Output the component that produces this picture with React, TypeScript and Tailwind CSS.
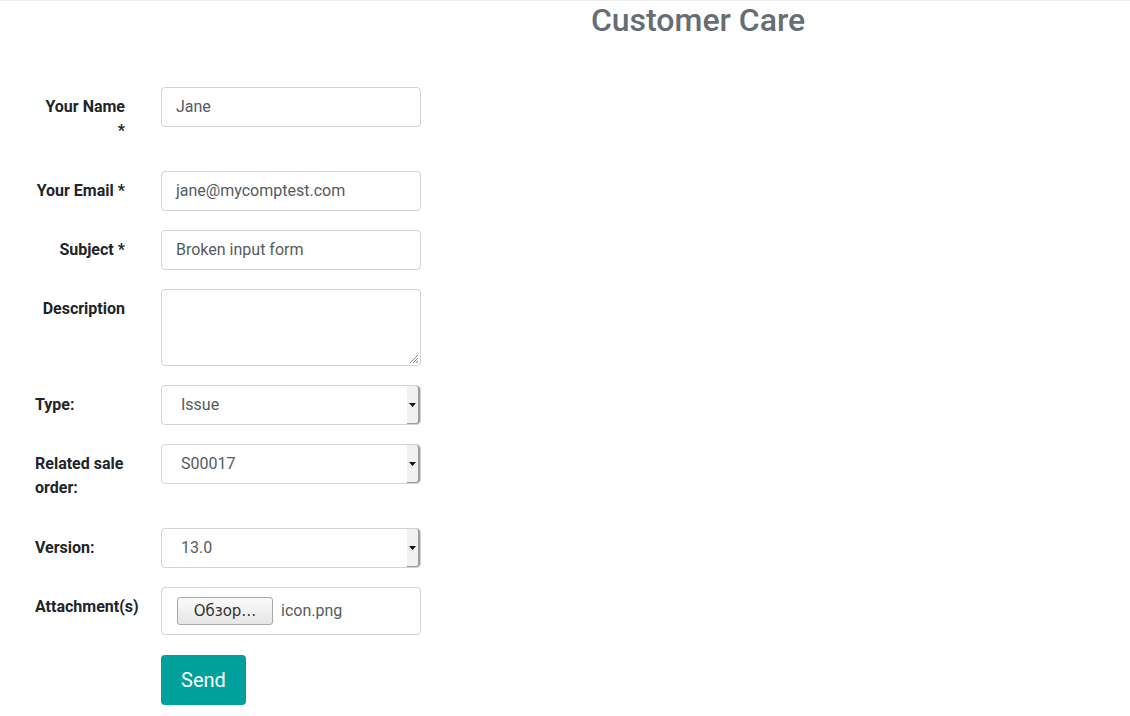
import React from "react";

const inputBox =
  "h-10 w-[260px] rounded border border-[#ced4da] bg-white pl-[14px] flex items-center text-[16px] text-[#555b62]";

const Label = ({
  children,
  right,
  tall,
}: {
  children: React.ReactNode;
  right?: boolean;
  tall?: boolean;
}) => (
  <div
    className={`w-[90px] shrink-0 pt-2 text-[16px] font-bold leading-6 text-[#212529] ${
      right ? "text-right" : "text-left"
    } ${tall ? "pb-[9px]" : "pb-2"}`}
  >
    {children}
  </div>
);

const SelectBox = ({ value }: { value: string }) => (
  <div className="relative flex h-10 w-[260px] items-center rounded border border-[#ced4da] bg-white pl-[19px] text-[16px] text-[#555b62]">
    {value}
    <div className="absolute top-0 right-0 bottom-0 flex w-[13px] items-center justify-center rounded-r border-r-2 border-b border-[#9a9a9a] bg-[#f1f1f1]">
      <svg width="7" height="4" viewBox="0 0 7 4">
        <path d="M0 0h7L3.5 4z" fill="#111" />
      </svg>
    </div>
  </div>
);

const Row = ({ children, mb = "mb-[19px]" }: { children: React.ReactNode; mb?: string }) => (
  <div className={`flex items-start gap-[36px] ${mb}`}>{children}</div>
);

export default function App() {
  return (
    <div className="min-h-screen border-t border-[#f0f0f0] bg-white font-['Roboto',sans-serif]">
      <h1 className="pl-[266px] text-center text-[32px] font-medium leading-[39px] text-[#666d75]">
        Customer Care
      </h1>

      <form className="mt-[47px] pl-[35px]">
        <Row>
          <Label right tall>
            Your Name *
          </Label>
          <div className={inputBox}>Jane</div>
        </Row>
        <Row>
          <Label right>Your Email *</Label>
          <div className={inputBox}>jane@mycomptest.com</div>
        </Row>
        <Row>
          <Label right>Subject *</Label>
          <div className={inputBox}>Broken input form</div>
        </Row>
        <Row>
          <Label right>Description</Label>
          <div className="relative h-[77px] w-[260px] rounded border border-[#ced4da] bg-white">
            <svg
              className="absolute right-[1px] bottom-[1px]"
              width="10"
              height="10"
              viewBox="0 0 10 10"
            >
              <path d="M9 1L1 9M9 4L4 9M9 7L7 9" stroke="#8a8a8a" strokeWidth="1" />
            </svg>
          </div>
        </Row>
        <Row mb="mb-[18px]">
          <Label>Type:</Label>
          <div className="h-[41px]">
            <SelectBox value="Issue" />
          </div>
        </Row>
        <Row mb="mb-[19px]">
          <Label tall>Related sale order:</Label>
          <SelectBox value="S00017" />
        </Row>
        <Row>
          <Label>Version:</Label>
          <SelectBox value="13.0" />
        </Row>
        <Row mb="mb-5">
          <Label>Attachment(s)</Label>
          <div className="flex h-12 w-[260px] items-center gap-2 rounded border border-[#ced4da] bg-white pl-[15px]">
            <div className="flex h-7 w-[96px] items-center justify-center rounded-[3px] border border-[#a8a8a8] bg-gradient-to-b from-[#fafafa] to-[#e6e6e6] font-['DejaVu_Sans',sans-serif] text-[15px] text-[#333]">
              Обзор…
            </div>
            <span className="text-[16px] text-[#555b62]">icon.png</span>
          </div>
        </Row>
        <div className="pl-[126px]">
          <button
            type="button"
            className="h-[50px] w-[85px] rounded bg-[#00a09d] text-[20px] text-white"
          >
            Send
          </button>
        </div>
      </form>
    </div>
  );
}
